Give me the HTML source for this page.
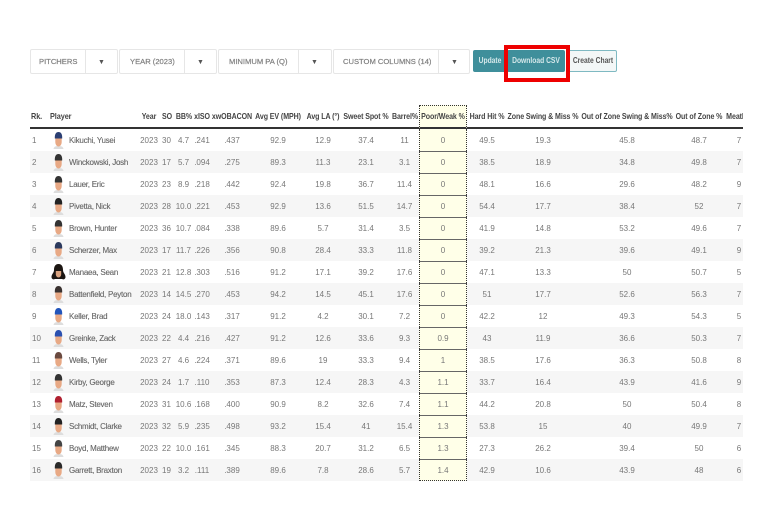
<!DOCTYPE html>
<html><head><meta charset="utf-8"><style>
html,body{margin:0;padding:0;background:#fff}
body{width:768px;height:512px;overflow:hidden;position:relative;font-family:"Liberation Sans",sans-serif}
#p{position:absolute;left:0;top:0;width:768px;height:512px;filter:blur(.35px)}
.b{position:absolute;top:49px;height:23px;border:1px solid #e6e6e6;border-radius:2px;color:#808080;font-size:7.6px;-webkit-text-stroke:.2px #808080;line-height:23px;box-sizing:content-box}
.b span{position:absolute;top:0;white-space:nowrap}
.b i{position:absolute;top:0;bottom:0;width:1px;background:#e6e6e6}
.b em{position:absolute;top:1px;font-style:normal;font-size:7px;color:#555;-webkit-text-stroke:0}
.u{position:absolute;top:50px;height:22px;line-height:22px;text-align:center;font-size:8px;font-weight:bold;border-radius:2px;color:#d5e8ea;background:#3f8f9b;overflow:hidden}
.u b{display:block;width:100px;margin-left:calc(50% - 50px);text-align:center;transform:scaleX(.84);white-space:nowrap}
#r{position:absolute;left:504px;top:45px;width:58px;height:29px;border:4px solid #ee0000}
#w{position:absolute;left:30px;top:105px;width:713px;height:380px;overflow:hidden}
table{border-collapse:separate;border-spacing:0;table-layout:fixed;width:725px}
th{height:24px;padding:0 0 1px;box-sizing:border-box;font-size:8.5px;font-weight:bold;color:#444;white-space:nowrap;border-bottom:2px solid #333;text-align:center;overflow:visible}
th b{display:block;width:200px;margin-left:calc(50% - 100px);text-align:center;transform:scaleX(.83);letter-spacing:-.1px}
th.l b{width:auto;margin:0;text-align:left;transform:scaleX(.86);transform-origin:0 50%}
td{height:22px;padding:0;box-sizing:border-box;font-size:8px;color:#777;text-align:center;white-space:nowrap}
tr:nth-child(even) td{background:#f6f6f6}
th.l{text-align:left;padding-left:1px}
td.l{text-align:left;padding-left:2px}
th.m b{margin-left:-79px}
td.n{text-align:left;padding-left:20px;position:relative;color:#666;letter-spacing:-.25px;-webkit-text-stroke:.12px #666}
td.n svg{position:absolute;left:3px;top:2px}
th.y{background:#ffffe8;border-top:1px dotted #333;border-left:1px dotted #333;border-right:1px dotted #333}
td.y,tr:nth-child(even) td.y{background:#ffffe8;border-left:1px dotted #333;border-right:1px dotted #333;border-top:1px solid #666}
tr:first-child td.y{border-top:0}
tr:last-child td.y{border-bottom:1px dotted #333}
</style></head><body>
<svg width="0" height="0" style="position:absolute"><defs><symbol id="f" viewBox="0 0 13 18">
<path d="M1.5 18c.4-2.200 2-3 5-3s4.600.8 5 3z" fill="#ddd"/>
<path d="M3.300 6h6.400v5c0 2.500-1.500 4.500-3.200 4.500S3.300 13.500 3.300 11z" fill="#e8a985"/>
<path d="M2.800 7.500C2.600 3 4 1 6.500 1s3.900 2 3.700 6.500z" fill="currentColor"/>
</symbol></defs></svg>
<div id="p">
<div class="b" style="left:30px;width:86px"><span style="left:8px">PITCHERS</span><i style="left:54px"></i><em style="left:67px">▼</em></div>
<div class="b" style="left:119px;width:96px"><span style="left:10px">YEAR (2023)</span><i style="left:64px"></i><em style="left:77px">▼</em></div>
<div class="b" style="left:218px;width:112px"><span style="left:10px">MINIMUM PA (Q)</span><i style="left:79px"></i><em style="left:92px">▼</em></div>
<div class="b" style="left:333px;width:135px"><span style="left:9px">CUSTOM COLUMNS (14)</span><i style="left:104px"></i><em style="left:117px">▼</em></div>
<div class="u" style="left:473px;width:33px"><b>Update</b></div>
<div class="u" style="left:507px;width:58px"><b>Download CSV</b></div>
<div class="u" style="left:568px;width:47px;background:#f3f7f7;color:#555;border:1px solid #7fb9c2;height:20px;line-height:20px"><b>Create Chart</b></div>
<div id="r"></div>
<div id="w"><table>
<colgroup><col style="width:19px"><col style="width:91px"><col style="width:18px"><col style="width:17px"><col style="width:17px"><col style="width:20px"><col style="width:40px"><col style="width:52px"><col style="width:38px"><col style="width:48px"><col style="width:29px"><col style="width:48px"><col style="width:40px"><col style="width:72px"><col style="width:96px"><col style="width:48px"><col style="width:32px"></colgroup>
<thead><tr><th class="l"><b>Rk.</b></th><th class="l"><b>Player</b></th><th><b>Year</b></th><th><b>SO</b></th><th><b>BB%</b></th><th><b>xISO</b></th><th><b>xwOBACON</b></th><th><b>Avg EV (MPH)</b></th><th><b>Avg LA (°)</b></th><th><b>Sweet Spot %</b></th><th><b>Barrel%</b></th><th class="y"><b>Poor/Weak %</b></th><th><b>Hard Hit %</b></th><th><b>Zone Swing &amp; Miss %</b></th><th><b>Out of Zone Swing &amp; Miss%</b></th><th><b>Out of Zone %</b></th><th class="m"><b>Meatball %</b></th></tr></thead>
<tbody>
<tr><td class="l">1</td><td class="n"><svg width="13" height="18" style="color:#2b3f73"><use href="#f"/></svg>Kikuchi, Yusei</td><td>2023</td><td>30</td><td>4.7</td><td>.241</td><td>.437</td><td>92.9</td><td>12.9</td><td>37.4</td><td>11</td><td class="y">0</td><td>49.5</td><td>19.3</td><td>45.8</td><td>48.7</td><td>7</td></tr>
<tr><td class="l">2</td><td class="n"><svg width="13" height="18" style="color:#333"><use href="#f"/></svg>Winckowski, Josh</td><td>2023</td><td>17</td><td>5.7</td><td>.094</td><td>.275</td><td>89.3</td><td>11.3</td><td>23.1</td><td>3.1</td><td class="y">0</td><td>38.5</td><td>18.9</td><td>34.8</td><td>49.8</td><td>7</td></tr>
<tr><td class="l">3</td><td class="n"><svg width="13" height="18" style="color:#333"><use href="#f"/></svg>Lauer, Eric</td><td>2023</td><td>23</td><td>8.9</td><td>.218</td><td>.442</td><td>92.4</td><td>19.8</td><td>36.7</td><td>11.4</td><td class="y">0</td><td>48.1</td><td>16.6</td><td>29.6</td><td>48.2</td><td>9</td></tr>
<tr><td class="l">4</td><td class="n"><svg width="13" height="18" style="color:#222"><use href="#f"/></svg>Pivetta, Nick</td><td>2023</td><td>28</td><td>10.0</td><td>.221</td><td>.453</td><td>92.9</td><td>13.6</td><td>51.5</td><td>14.7</td><td class="y">0</td><td>54.4</td><td>17.7</td><td>38.4</td><td>52</td><td>7</td></tr>
<tr><td class="l">5</td><td class="n"><svg width="13" height="18" style="color:#333"><use href="#f"/></svg>Brown, Hunter</td><td>2023</td><td>36</td><td>10.7</td><td>.084</td><td>.338</td><td>89.6</td><td>5.7</td><td>31.4</td><td>3.5</td><td class="y">0</td><td>41.9</td><td>14.8</td><td>53.2</td><td>49.6</td><td>7</td></tr>
<tr><td class="l">6</td><td class="n"><svg width="13" height="18" style="color:#2c3a5e"><use href="#f"/></svg>Scherzer, Max</td><td>2023</td><td>17</td><td>11.7</td><td>.226</td><td>.356</td><td>90.8</td><td>28.4</td><td>33.3</td><td>11.8</td><td class="y">0</td><td>39.2</td><td>21.3</td><td>39.6</td><td>49.1</td><td>9</td></tr>
<tr><td class="l">7</td><td class="n"><svg width="15" height="18" viewBox="0 0 15 18" style="left:2px"><path d="M7.500 1C4 1 3 4 3 7c0 3-2.500 4-2.500 7 0 2 2 3 3.500 2h7c1.500 1 3.500 0 3.500-2 0-3-2.500-4-2.500-7 0-3-1-6-4.500-6z" fill="#1c1612"/><path d="M4.800 8h5.400v3c0 2-1.200 3.500-2.700 3.500S4.800 13 4.800 11z" fill="#d9a27f"/></svg>Manaea, Sean</td><td>2023</td><td>21</td><td>12.8</td><td>.303</td><td>.516</td><td>91.2</td><td>17.1</td><td>39.2</td><td>17.6</td><td class="y">0</td><td>47.1</td><td>13.3</td><td>50</td><td>50.7</td><td>5</td></tr>
<tr><td class="l">8</td><td class="n"><svg width="13" height="18" style="color:#3a3230"><use href="#f"/></svg>Battenfield, Peyton</td><td>2023</td><td>14</td><td>14.5</td><td>.270</td><td>.453</td><td>94.2</td><td>14.5</td><td>45.1</td><td>17.6</td><td class="y">0</td><td>51</td><td>17.7</td><td>52.6</td><td>56.3</td><td>7</td></tr>
<tr><td class="l">9</td><td class="n"><svg width="13" height="18" style="color:#2255bb"><use href="#f"/></svg>Keller, Brad</td><td>2023</td><td>24</td><td>18.0</td><td>.143</td><td>.317</td><td>91.2</td><td>4.2</td><td>30.1</td><td>7.2</td><td class="y">0</td><td>42.2</td><td>12</td><td>49.3</td><td>54.3</td><td>5</td></tr>
<tr><td class="l">10</td><td class="n"><svg width="13" height="18" style="color:#2a50b0"><use href="#f"/></svg>Greinke, Zack</td><td>2023</td><td>22</td><td>4.4</td><td>.216</td><td>.427</td><td>91.2</td><td>12.6</td><td>33.6</td><td>9.3</td><td class="y">0.9</td><td>43</td><td>11.9</td><td>36.6</td><td>50.3</td><td>7</td></tr>
<tr><td class="l">11</td><td class="n"><svg width="13" height="18" style="color:#6a4a40"><use href="#f"/></svg>Wells, Tyler</td><td>2023</td><td>27</td><td>4.6</td><td>.224</td><td>.371</td><td>89.6</td><td>19</td><td>33.3</td><td>9.4</td><td class="y">1</td><td>38.5</td><td>17.6</td><td>36.3</td><td>50.8</td><td>8</td></tr>
<tr><td class="l">12</td><td class="n"><svg width="13" height="18" style="color:#333"><use href="#f"/></svg>Kirby, George</td><td>2023</td><td>24</td><td>1.7</td><td>.110</td><td>.353</td><td>87.3</td><td>12.4</td><td>28.3</td><td>4.3</td><td class="y">1.1</td><td>33.7</td><td>16.4</td><td>43.9</td><td>41.6</td><td>9</td></tr>
<tr><td class="l">13</td><td class="n"><svg width="13" height="18" style="color:#b02030"><use href="#f"/></svg>Matz, Steven</td><td>2023</td><td>31</td><td>10.6</td><td>.168</td><td>.400</td><td>90.9</td><td>8.2</td><td>32.6</td><td>7.4</td><td class="y">1.1</td><td>44.2</td><td>20.8</td><td>50</td><td>50.4</td><td>8</td></tr>
<tr><td class="l">14</td><td class="n"><svg width="13" height="18" style="color:#222"><use href="#f"/></svg>Schmidt, Clarke</td><td>2023</td><td>32</td><td>5.9</td><td>.235</td><td>.498</td><td>93.2</td><td>15.4</td><td>41</td><td>15.4</td><td class="y">1.3</td><td>53.8</td><td>15</td><td>40</td><td>49.9</td><td>7</td></tr>
<tr><td class="l">15</td><td class="n"><svg width="13" height="18" style="color:#444"><use href="#f"/></svg>Boyd, Matthew</td><td>2023</td><td>22</td><td>10.0</td><td>.161</td><td>.345</td><td>88.3</td><td>20.7</td><td>31.2</td><td>6.5</td><td class="y">1.3</td><td>27.3</td><td>26.2</td><td>39.4</td><td>50</td><td>6</td></tr>
<tr><td class="l">16</td><td class="n"><svg width="13" height="18" style="color:#2a2a2a"><use href="#f"/></svg>Garrett, Braxton</td><td>2023</td><td>19</td><td>3.2</td><td>.111</td><td>.389</td><td>89.6</td><td>7.8</td><td>28.6</td><td>5.7</td><td class="y">1.4</td><td>42.9</td><td>10.6</td><td>43.9</td><td>48</td><td>6</td></tr>
</tbody></table></div>
</div>
</body></html>
